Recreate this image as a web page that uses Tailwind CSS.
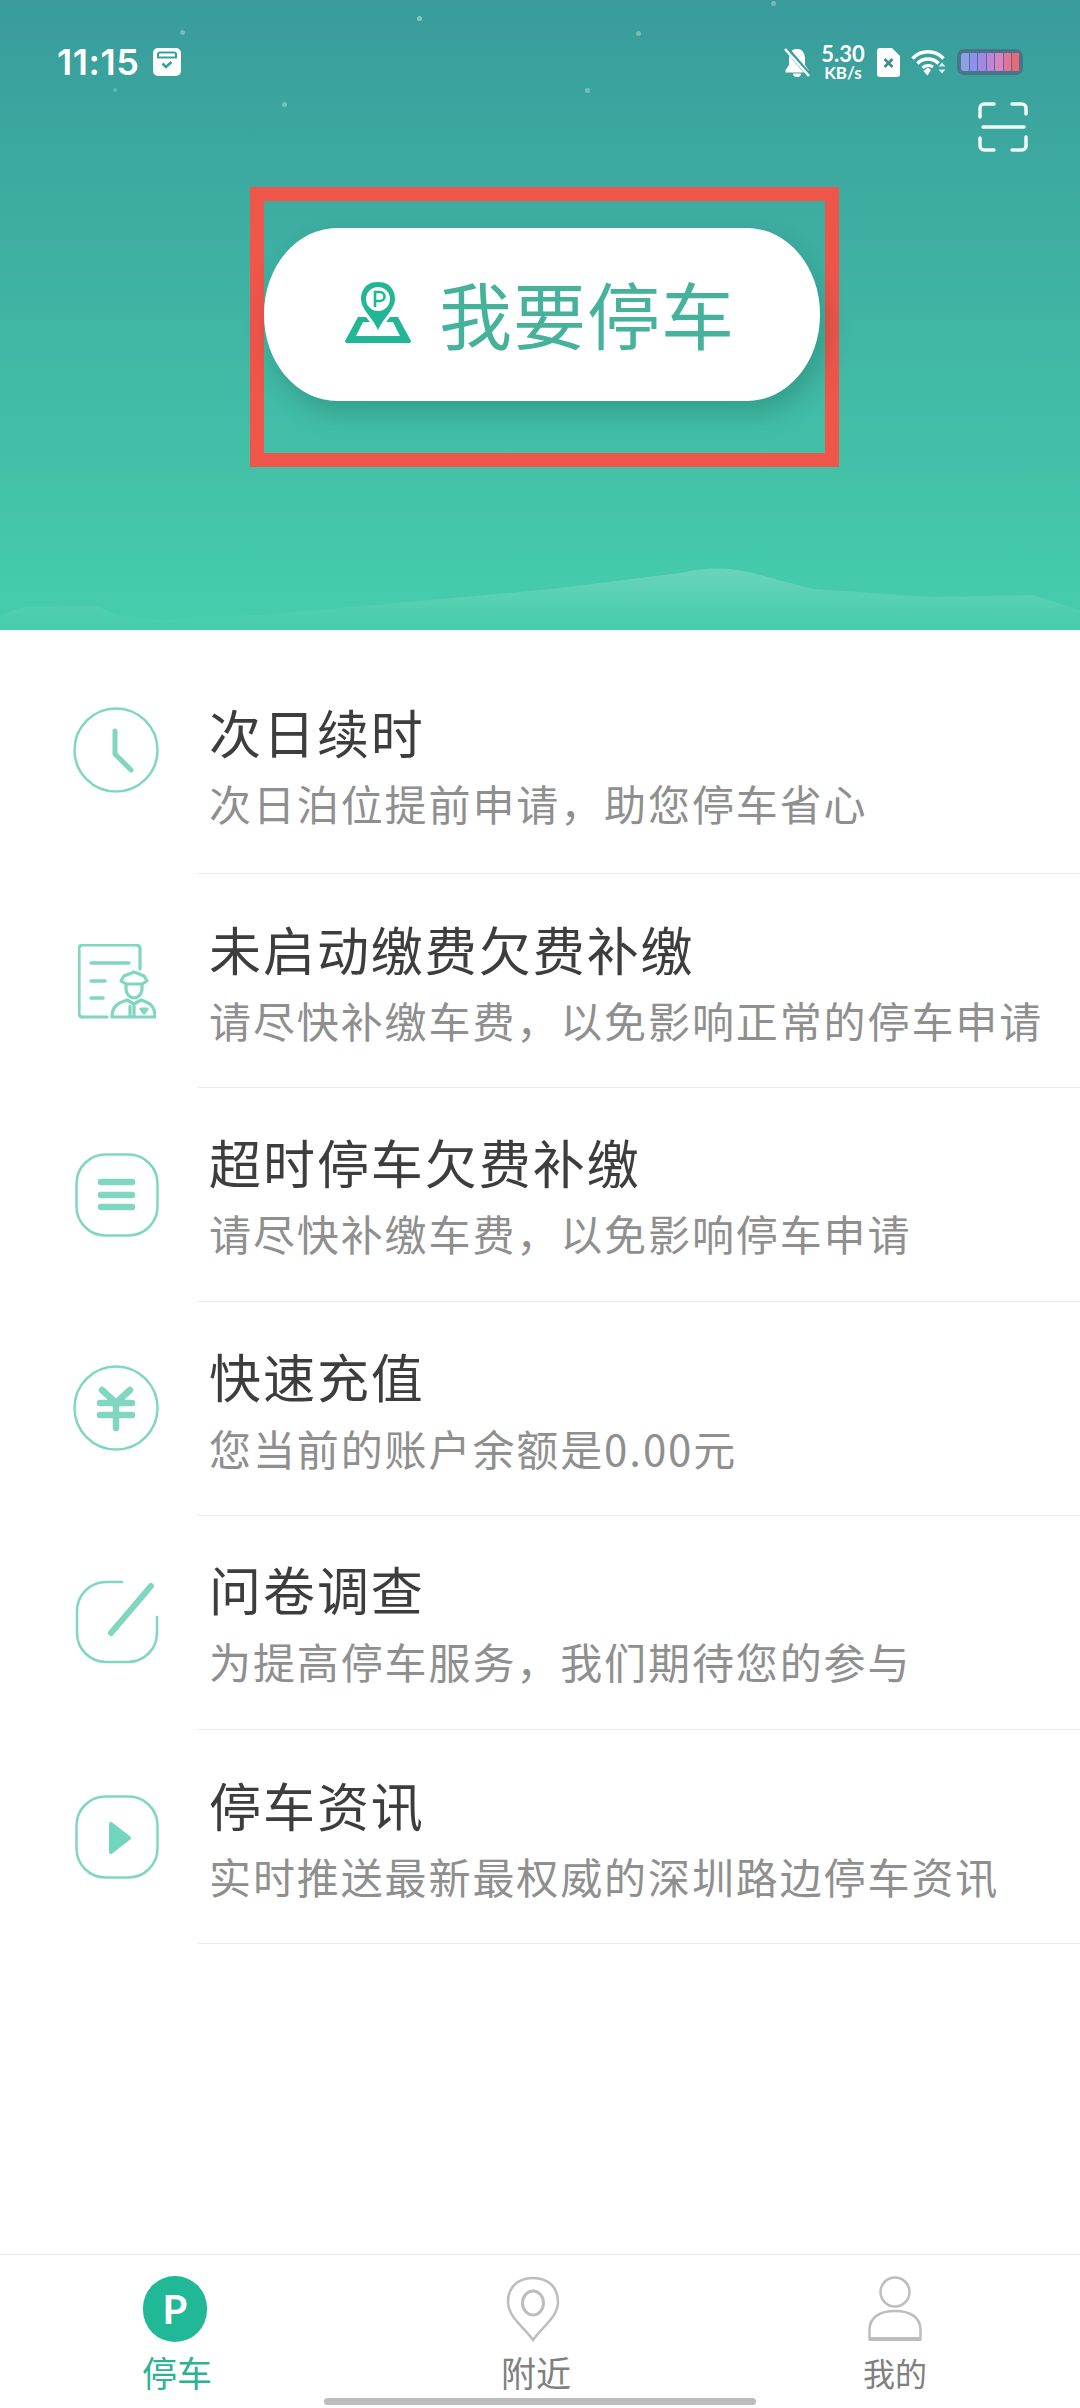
<!DOCTYPE html>
<html lang="zh-CN">
<head>
    <meta charset="UTF-8">
    <meta name="viewport" content="width=device-width, initial-scale=1.0">
    <title>停车</title>
    <script src="https://cdn.jsdelivr.net/npm/@tailwindcss/browser@4"></script>
</head>
<body class="bg-white font-['Noto_Sans_CJK_SC','Noto_Sans',sans-serif]">
<div class="w-[1080px] h-[2408px] flex flex-col overflow-hidden">

    <!-- Hero -->
    <header class="relative h-[630px] shrink-0 bg-gradient-to-b from-[#399c9b] to-[#46ceac] overflow-hidden">
        <!-- stars -->
        <span class="absolute left-[180px] top-[30px] w-[5px] h-[5px] rounded-full bg-white/30"></span>
        <span class="absolute left-[417px] top-[16px] w-[5px] h-[5px] rounded-full bg-white/40"></span>
        <span class="absolute left-[636px] top-[31px] w-[5px] h-[5px] rounded-full bg-white/30"></span>
        <span class="absolute left-[771px] top-[1px] w-[5px] h-[5px] rounded-full bg-white/30"></span>
        <span class="absolute left-[113px] top-[88px] w-[4px] h-[4px] rounded-full bg-white/20"></span>
        <span class="absolute left-[282px] top-[102px] w-[5px] h-[5px] rounded-full bg-white/30"></span>
        <span class="absolute left-[585px] top-[88px] w-[5px] h-[5px] rounded-full bg-white/30"></span>

        <!-- hills -->
        <svg class="absolute left-0 bottom-0" width="1080" height="70" viewBox="0 560 1080 70">
            <defs>
                <linearGradient id="hill" x1="0" y1="0" x2="0" y2="1">
                    <stop offset="0" stop-color="#ffffff" stop-opacity="0.2"/>
                    <stop offset="0.75" stop-color="#ffffff" stop-opacity="0.04"/>
                    <stop offset="1" stop-color="#ffffff" stop-opacity="0"/>
                </linearGradient>
            </defs>
            <path d="M0 618 Q12 608 28 607 L96 606 L124 618 L165 620 L275 614 L551 589 L680 573 Q723 563 760 575 L813 589 L930 597 L1033 595 L1080 610 L1080 630 L0 630 Z" fill="url(#hill)"/>
        </svg>

        <!-- status bar -->
        <div class="relative flex items-center h-[82px] pt-[42px] pl-[57px] pr-[57px] text-white">
            <span class="font-['Inter',sans-serif] font-semibold text-[36px] leading-none tracking-[0.500px] w-[96px]">11:15</span>
            <svg width="28" height="28" viewBox="0 0 28 28">
                <path d="M5 0H23A5 5 0 0 1 28 5V23A5 5 0 0 1 23 28H5A5 5 0 0 1 0 23V5A5 5 0 0 1 5 0Z" fill="#fff"/>
                <path d="M5 9V6.500A2 2 0 0 1 7 4.500H21A2 2 0 0 1 23 6.500V9M4 9.500H24" fill="none" stroke="#3a9f9c" stroke-width="2"/>
                <path d="M9.500 15.500L13 19L18.500 14" fill="none" stroke="#3a9f9c" stroke-width="2.600"/>
            </svg>
            <div class="ml-auto flex items-center">
                <svg width="26" height="30" viewBox="0 0 26 30">
                    <path d="M13 2C7 2 5 7 5 12V18L1.500 23V25.500H24.500V23L21 18V12C21 7 19 2 13 2Z" fill="#fff"/>
                    <path d="M9 26.500A4 3.500 0 0 0 17 26.500Z" fill="#fff"/>
                    <path d="M1 0L26 29" stroke="#3a9f9c" stroke-width="5"/>
                    <path d="M1 2L25 29" stroke="#fff" stroke-width="2.500"/>
                </svg>
                <div class="ml-[10px] w-[46px] flex flex-col items-center font-['Lato',sans-serif] font-bold leading-none">
                    <span class="text-[22px] h-[20px] leading-[20px]">5.30</span>
                    <span class="text-[17px] h-[17px] leading-[17px]">KB/s</span>
                </div>
                <svg class="ml-[11px]" width="23" height="29" viewBox="0 0 23 29">
                    <path d="M3 0H15L23 8V26A3 3 0 0 1 20 29H3A3 3 0 0 1 0 26V3A3 3 0 0 1 3 0Z" fill="#fff"/>
                    <path d="M7.500 11L15.500 19M15.500 11L7.500 19" stroke="#3a8f8c" stroke-width="2.600"/>
                </svg>
                <svg class="ml-[11px]" width="35" height="28" viewBox="0 0 35 28">
                    <path d="M1.500 10.500C10 1.500 24 1.500 32.500 10.500" fill="none" stroke="#fff" stroke-width="3.400"/>
                    <path d="M6.500 15.500C12 9.500 22 9.500 27.500 15.500" fill="none" stroke="#fff" stroke-width="3.400"/>
                    <path d="M11.500 20C14.500 17 19 17 22 19" fill="none" stroke="#fff" stroke-width="3.200"/>
                    <path d="M12.500 23L17 19.500L20 22L16.500 27.500Z" fill="#fff"/>
                    <path d="M27.500 18.500L31 14.500L34.500 18.500ZM27.500 21.500H34.500L31 25.500Z" fill="#fff" fill-opacity="0.8"/>
                </svg>
                <!-- battery -->
                <div class="ml-[11px] w-[66px] h-[26px] rounded-[7px] bg-[#47768a] p-[4px] flex gap-[1px] overflow-hidden">
                    <span class="w-[8px] bg-[#8f9fdf] rounded-l-[3px]"></span>
                    <span class="w-[8px] bg-[#8f8ff0]"></span>
                    <span class="w-[8px] bg-[#a388e2]"></span>
                    <span class="w-[8px] bg-[#c084d8]"></span>
                    <span class="w-[8px] bg-[#dc82c4]"></span>
                    <span class="w-[8px] bg-[#e77295]"></span>
                    <span class="w-[7px] bg-[#e86a78]"></span>
                </div>
            </div>
        </div>

        <!-- scan -->
        <div class="relative flex justify-end pr-[52px] pt-[20px]">
            <svg width="50" height="50" viewBox="0 0 50 50" fill="none" stroke="#ffffff" stroke-opacity="0.92" stroke-width="3.500" stroke-linecap="round" stroke-linejoin="round">
                <path d="M2 15V6A4 4 0 0 1 6 2H16"/>
                <path d="M34 2H44A4 4 0 0 1 48 6V12"/>
                <path d="M5 25H46"/>
                <path d="M2 36V44A4 4 0 0 0 6 48H16"/>
                <path d="M34 48H44A4 4 0 0 0 48 44V35"/>
            </svg>
        </div>

        <!-- highlighted parking button -->
        <div class="relative ml-[250px] mt-[35px] w-[589px] h-[280px] border-[14px] border-[#f0554a]">
            <button class="mt-[27px] w-[556px] h-[173px] rounded-[73px/86px] bg-white shadow-[6px_12px_24px_rgba(0,60,50,0.22)] flex items-center pl-[81px] pb-[5px]">
                <svg width="66" height="61" viewBox="0 0 66 61">
                    <path d="M33 0C17 0 16 14 16 17C16 27 27 35 33 48C39 35 50 27 50 17C50 14 49 0 33 0Z" fill="#23b695"/>
                    <circle cx="33" cy="17" r="12" fill="#fff"/>
                    <path d="M30 25V10H35A4.500 4.500 0 0 1 35 19H30" fill="none" stroke="#23b695" stroke-width="2.600"/>
                    <path d="M21 35H13L0 59Q0 61 3 61H63Q66 61 66 59L53 35H45L41 40H48L55 54H11L18 40H25Z" fill="#23b695"/>
                </svg>
                <span class="ml-[28px] text-[73px] leading-none text-[#46b29c] tracking-[1px]">我要停车</span>
            </button>
        </div>
    </header>

    <!-- Menu -->
    <main class="flex-1 pt-[30px]">
        <!-- clock -->
        <div class="flex h-[214px]">
            <div class="w-[197px] pl-[73px] pt-[47px] shrink-0">
                <svg width="86" height="86" viewBox="0 0 86 86" fill="none" stroke="#80d6c1">
                    <circle cx="43" cy="43" r="41.500" stroke-width="2.500"/>
                    <path d="M42 24V47L58 63" stroke-width="5" stroke-linecap="round" stroke-linejoin="round"/>
                </svg>
            </div>
            <div class="flex-1 border-b border-[#ececec] pl-[12px] pt-[37px]">
                <p class="text-[52px] leading-[70px] tracking-[1.950px] text-[#3d3d3d]">次日续时</p>
                <p class="text-[42px] leading-[72px] tracking-[1.900px] text-[#8f8f8f]">次日泊位提前申请，助您停车省心</p>
            </div>
        </div>

        <!-- ticket officer -->
        <div class="flex h-[214px]">
            <div class="w-[197px] pl-[78px] pt-[70px] shrink-0">
                <svg width="78" height="75" viewBox="0 0 78 75" fill="none" stroke="#80d6c1" stroke-width="3.200" stroke-linecap="round" stroke-linejoin="round">
                    <path d="M62 25V6A4 4 0 0 0 58 1H6A4 4 0 0 0 1 6V68A4 4 0 0 0 6 73H29"/>
                    <path d="M13 19H51" stroke-width="3.500"/>
                    <path d="M13 37H27" stroke-width="3.500"/>
                    <path d="M13 54H25" stroke-width="3.500"/>
                    <path d="M46 32L56 28L66 32L69 37L64 40H48L43 37Z"/>
                    <path d="M48 41V45C48 50 52 54 56 54C60 54 64 50 64 45V41"/>
                    <path d="M34 73C34 62 40 59 49 56L56 60L63 56C72 59 77 62 77 73Z"/>
                    <path d="M52 62V72M56 62V72"/>
                    <path d="M63 65H69L66 69Z" fill="#80d6c1"/>
                </svg>
            </div>
            <div class="flex-1 border-b border-[#ececec] pl-[12px] pt-[40px]">
                <p class="text-[52px] leading-[70px] tracking-[1.950px] text-[#3d3d3d]">未启动缴费欠费补缴</p>
                <p class="text-[42px] leading-[72px] tracking-[1.900px] text-[#8f8f8f]">请尽快补缴车费，以免影响正常的停车申请</p>
            </div>
        </div>

        <!-- overdue -->
        <div class="flex h-[214px]">
            <div class="w-[197px] pl-[75px] pt-[65px] shrink-0">
                <svg width="84" height="84" viewBox="0 0 84 84" fill="none" stroke="#80d6c1">
                    <rect x="1.500" y="1.500" width="81" height="81" rx="29" stroke-width="2.500"/>
                    <path d="M26 29H57M26 42H57M26 54H57" stroke-width="6.500" stroke-linecap="round"/>
                </svg>
            </div>
            <div class="flex-1 border-b border-[#ececec] pl-[12px] pt-[39px]">
                <p class="text-[52px] leading-[70px] tracking-[1.950px] text-[#3d3d3d]">超时停车欠费补缴</p>
                <p class="text-[42px] leading-[72px] tracking-[1.900px] text-[#8f8f8f]">请尽快补缴车费，以免影响停车申请</p>
            </div>
        </div>

        <!-- top up -->
        <div class="flex h-[214px]">
            <div class="w-[197px] pl-[73px] pt-[63px] shrink-0">
                <svg width="86" height="86" viewBox="0 0 86 86" fill="none" stroke="#80d6c1">
                    <circle cx="43" cy="43" r="41.500" stroke-width="2.500"/>
                    <path d="M29 25L43 38L57 25M43 38V63M27 38H59M27 50H59" stroke-width="6.500" stroke-linecap="round" stroke-linejoin="round"/>
                </svg>
            </div>
            <div class="flex-1 border-b border-[#ececec] pl-[12px] pt-[38px]">
                <p class="text-[52px] leading-[72px] tracking-[1.950px] text-[#3d3d3d]">快速充值</p>
                <p class="text-[42px] leading-[72px] tracking-[1.900px] text-[#8f8f8f]">您当前的账户余额是0.00元</p>
            </div>
        </div>

        <!-- survey -->
        <div class="flex h-[214px]">
            <div class="w-[197px] pl-[75px] pt-[64px] shrink-0">
                <svg width="84" height="84" viewBox="0 0 84 84" fill="none" stroke="#80d6c1" stroke-linecap="round">
                    <path d="M47 2H31A29 29 0 0 0 2 31V53A29 29 0 0 0 31 82H53A29 29 0 0 0 82 53V37" stroke-width="2.500"/>
                    <path d="M36 53L76 6" stroke-width="6"/>
                </svg>
            </div>
            <div class="flex-1 border-b border-[#ececec] pl-[12px] pt-[37px]">
                <p class="text-[52px] leading-[72px] tracking-[1.950px] text-[#3d3d3d]">问卷调查</p>
                <p class="text-[42px] leading-[72px] tracking-[1.900px] text-[#8f8f8f]">为提高停车服务，我们期待您的参与</p>
            </div>
        </div>

        <!-- news -->
        <div class="flex h-[214px]">
            <div class="w-[197px] pl-[75px] pt-[65px] shrink-0">
                <svg width="84" height="84" viewBox="0 0 84 84" fill="none" stroke="#80d6c1">
                    <rect x="1.500" y="1.500" width="81" height="81" rx="29" stroke-width="2.500"/>
                    <path d="M36 29L54 43L36 57Z" fill="#72d5bd" stroke="#72d5bd" stroke-width="4" stroke-linejoin="round"/>
                </svg>
            </div>
            <div class="flex-1 border-b border-[#ececec] pl-[12px] pt-[39px]">
                <p class="text-[52px] leading-[71px] tracking-[1.950px] text-[#3d3d3d]">停车资讯</p>
                <p class="text-[42px] leading-[72px] tracking-[1.900px] text-[#8f8f8f]">实时推送最新最权威的深圳路边停车资讯</p>
            </div>
        </div>
    </main>

    <!-- Tab bar -->
    <nav class="relative h-[154px] shrink-0 border-t border-[#e8e8e8] pt-[21px] flex">
        <div class="w-[354px] flex flex-col items-center">
            <div class="mr-[4px] w-[64px] h-[66px] rounded-full bg-[#20b897] flex items-center justify-center">
                <span class="font-['Lato',sans-serif] font-bold text-[40px] leading-none text-white">P</span>
            </div>
            <span class="mt-[8px] text-[35px] leading-[44px] text-[#2eb194]">停车</span>
        </div>
        <div class="w-[358px] flex flex-col items-center">
            <svg width="54" height="66" viewBox="0 0 54 66" fill="none" stroke="#bdbdbd" stroke-width="2.500">
                <path d="M27 2C10 2 2 13 2 26C2 41 18 51 27 64C36 51 52 41 52 26C52 13 44 2 27 2Z"/>
                <ellipse cx="27" cy="27" rx="10.500" ry="12" stroke-width="3"/>
            </svg>
            <span class="mt-[8px] ml-[6px] text-[35px] leading-[44px] text-[#808080]">附近</span>
        </div>
        <div class="w-[366px] flex flex-col items-center">
            <svg width="54" height="66" viewBox="0 0 54 66" fill="none" stroke="#bdbdbd" stroke-width="2.500">
                <ellipse cx="27" cy="16" rx="14.500" ry="14.500"/>
                <path d="M1.500 63V54C1.500 41 12 35 27 35C42 35 52.500 41 52.500 54V63Z"/>
                <path d="M1 63H53" stroke-width="4"/>
            </svg>
            <span class="mt-[8px] text-[32px] leading-[44px] text-[#808080]">我的</span>
        </div>
        <span class="absolute left-[324px] bottom-[3px] w-[432px] h-[7px] rounded-full bg-[#bdbdbd]"></span>
    </nav>
</div>
</body>
</html>
